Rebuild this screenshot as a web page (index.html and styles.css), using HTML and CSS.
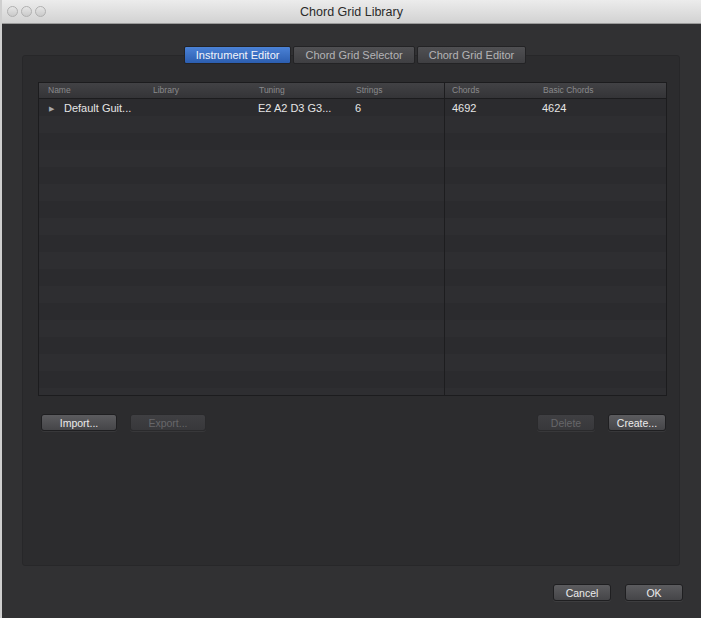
FILE: index.html
```html
<!DOCTYPE html>
<html lang="en">
<head>
    <meta charset="UTF-8">
    <title>Chord Grid Library</title>
    <link rel="stylesheet" href="styles.css">
</head>
<body>
    <!-- barra del titolo -->
    <div class="titlebar">
        <div class="lights">
            <span class="light"></span>
            <span class="light"></span>
            <span class="light"></span>
        </div>
        <div class="title">Chord Grid Library</div>
    </div>
    <div class="window">
        <!-- tab -->
        <div class="tabs">
            <div class="tab active">Instrument Editor</div>
            <div class="tab">Chord Grid Selector</div>
            <div class="tab">Chord Grid Editor</div>
        </div>
        <div class="panel">
            <div class="table">
                <div class="row head">
                    <div class="cell">Name</div>
                    <div class="cell">Library</div>
                    <div class="cell">Tuning</div>
                    <div class="cell">Strings</div>
                    <div class="cell sep">Chords</div>
                    <div class="cell">Basic Chords</div>
                </div>
                <div class="body">
                    <div class="row">
                        <div class="cell name"><span class="arrow">&#9654;</span>Default Guit...</div>
                        <div class="cell"></div>
                        <div class="cell">E2 A2 D3 G3...</div>
                        <div class="cell">6</div>
                        <div class="cell sep">4692</div>
                        <div class="cell">4624</div>
                    </div>
                    <div class="row"><div class="cell"></div><div class="cell"></div><div class="cell"></div><div class="cell"></div><div class="cell sep"></div><div class="cell"></div></div>
                    <div class="row"><div class="cell"></div><div class="cell"></div><div class="cell"></div><div class="cell"></div><div class="cell sep"></div><div class="cell"></div></div>
                    <div class="row"><div class="cell"></div><div class="cell"></div><div class="cell"></div><div class="cell"></div><div class="cell sep"></div><div class="cell"></div></div>
                    <div class="row"><div class="cell"></div><div class="cell"></div><div class="cell"></div><div class="cell"></div><div class="cell sep"></div><div class="cell"></div></div>
                    <div class="row"><div class="cell"></div><div class="cell"></div><div class="cell"></div><div class="cell"></div><div class="cell sep"></div><div class="cell"></div></div>
                    <div class="row"><div class="cell"></div><div class="cell"></div><div class="cell"></div><div class="cell"></div><div class="cell sep"></div><div class="cell"></div></div>
                    <div class="row"><div class="cell"></div><div class="cell"></div><div class="cell"></div><div class="cell"></div><div class="cell sep"></div><div class="cell"></div></div>
                    <div class="row"><div class="cell"></div><div class="cell"></div><div class="cell"></div><div class="cell"></div><div class="cell sep"></div><div class="cell"></div></div>
                    <div class="row"><div class="cell"></div><div class="cell"></div><div class="cell"></div><div class="cell"></div><div class="cell sep"></div><div class="cell"></div></div>
                    <div class="row"><div class="cell"></div><div class="cell"></div><div class="cell"></div><div class="cell"></div><div class="cell sep"></div><div class="cell"></div></div>
                    <div class="row"><div class="cell"></div><div class="cell"></div><div class="cell"></div><div class="cell"></div><div class="cell sep"></div><div class="cell"></div></div>
                    <div class="row"><div class="cell"></div><div class="cell"></div><div class="cell"></div><div class="cell"></div><div class="cell sep"></div><div class="cell"></div></div>
                    <div class="row"><div class="cell"></div><div class="cell"></div><div class="cell"></div><div class="cell"></div><div class="cell sep"></div><div class="cell"></div></div>
                    <div class="row"><div class="cell"></div><div class="cell"></div><div class="cell"></div><div class="cell"></div><div class="cell sep"></div><div class="cell"></div></div>
                    <div class="row"><div class="cell"></div><div class="cell"></div><div class="cell"></div><div class="cell"></div><div class="cell sep"></div><div class="cell"></div></div>
                    <div class="row"><div class="cell"></div><div class="cell"></div><div class="cell"></div><div class="cell"></div><div class="cell sep"></div><div class="cell"></div></div>
                    <div class="row"><div class="cell"></div><div class="cell"></div><div class="cell"></div><div class="cell"></div><div class="cell sep"></div><div class="cell"></div></div>
                </div>
            </div>
            <!-- pulsanti del pannello -->
            <div class="actions">
                <div class="group">
                    <button class="btn wide">Import...</button>
                    <button class="btn wide" disabled>Export...</button>
                </div>
                <div class="group">
                    <button class="btn" disabled>Delete</button>
                    <button class="btn">Create...</button>
                </div>
            </div>
        </div>
        <div class="footer">
            <button class="btn">Cancel</button>
            <button class="btn">OK</button>
        </div>
    </div>
</body>
</html>
```

FILE: styles.css
```css
:root{
    --bg-color: #313133;
    --panel-color: #2c2c2e;
    --table-color: #2b2b2e;
    --stripe-color: #2e2e31;
    --text-color: #e6e6e6;
    --muted-color: #8a8a8c;
}
html, body{
    margin: 0;
    height: 100%;
}
body{
    background-color: var(--bg-color);
    font-family: "Liberation Sans", Arial, sans-serif;
    color: var(--text-color);
    display: flex;
    flex-direction: column;
    border-left: 2px solid #cfcfcf;
    box-sizing: border-box;
}
.titlebar{
    height: 24px;
    flex: 0 0 auto;
    background: linear-gradient(#ececec, #d2d2d2);
    border-bottom: 1px solid #9a9a9a;
    box-sizing: border-box;
    display: flex;
    align-items: center;
    position: relative;
}
.lights{
    display: flex;
    gap: 3px;
    padding-left: 5px;
}
.light{
    width: 9px;
    height: 9px;
    border-radius: 50%;
    background: linear-gradient(#e6e6e6, #cacaca);
    border: 1px solid #b0b0b0;
}
.title{
    position: absolute;
    left: 0;
    right: 0;
    text-align: center;
    font-size: 12.5px;
    color: #2a2a2a;
}
.window{
    flex: 1 1 auto;
    display: flex;
    flex-direction: column;
    padding: 22px 21px 0 20px;
}
.tabs{
    display: flex;
    justify-content: center;
    gap: 2px;
    margin-bottom: -9px;
    position: relative;
    z-index: 1;
    padding-left: 8px;
}
.tab{
    height: 16px;
    line-height: 16px;
    font-size: 11px;
    color: #b4b4b6;
    padding: 0 11px;
    background: linear-gradient(#505053, #3f3f42);
    border: 1px solid #232325;
    border-radius: 2px;
}
.tab.active{
    background: linear-gradient(#4b82d6, #2c5eb0);
    color: #f2f4fa;
}
.panel{
    height: 511px;
    box-sizing: border-box;
    background-color: var(--panel-color);
    border: 1px solid #272729;
    border-radius: 3px;
    padding: 26px 12px 0 15px;
}
.table{
    height: 314px;
    display: flex;
    flex-direction: column;
    border: 1px solid #1c1c1e;
    background-color: var(--table-color);
    box-sizing: border-box;
    overflow: hidden;
}
.row{
    display: grid;
    grid-template-columns: 106px 106px 97px 96px 91px 1fr;
    height: 17px;
    flex: 0 0 auto;
}
.row.head{
    height: 15px;
    background: linear-gradient(#424245, #343437);
    border-bottom: 1px solid #1c1c1e;
}
.head .cell{
    font-size: 8.5px;
    line-height: 15px;
    color: var(--muted-color);
    border-left: 1px solid transparent;
}
.head .cell:first-child{
    padding-left: 8px;
}
.cell{
    padding-left: 7px;
    font-size: 11px;
    line-height: 17px;
    white-space: nowrap;
    overflow: hidden;
}
.cell.sep{
    border-left: 1px solid #1d1d1f;
}
.body{
    flex: 1 1 auto;
}
.body .row:nth-child(even){
    background-color: var(--stripe-color);
}
.body .row:first-child .cell{
    line-height: 18px;
}
.name{
    padding-left: 10px;
}
.arrow{
    font-size: 7px;
    color: #a8a8aa;
    margin-right: 10px;
    vertical-align: 1px;
}
.actions{
    display: flex;
    justify-content: space-between;
    margin-top: 18px;
    padding: 0 1px 0 3px;
}
.group{
    display: flex;
    gap: 13px;
}
.btn{
    font-family: "Liberation Sans", Arial, sans-serif;
    font-size: 10.5px;
    color: #ececec;
    width: 58px;
    height: 17px;
    padding: 0;
    background: linear-gradient(#5c5c5f, #454548);
    border: 1px solid #1f1f21;
    border-radius: 3px;
    box-shadow: 0 1px 0 rgba(255,255,255,.06);
}
.btn.wide{
    width: 76px;
}
.btn:disabled{
    background: linear-gradient(#3f3f42, #38383b);
    color: #67676a;
    border-color: #2a2a2c;
}
.footer{
    display: flex;
    justify-content: flex-end;
    gap: 14px;
    margin-top: 18px;
    margin-right: -3px;
}
```
